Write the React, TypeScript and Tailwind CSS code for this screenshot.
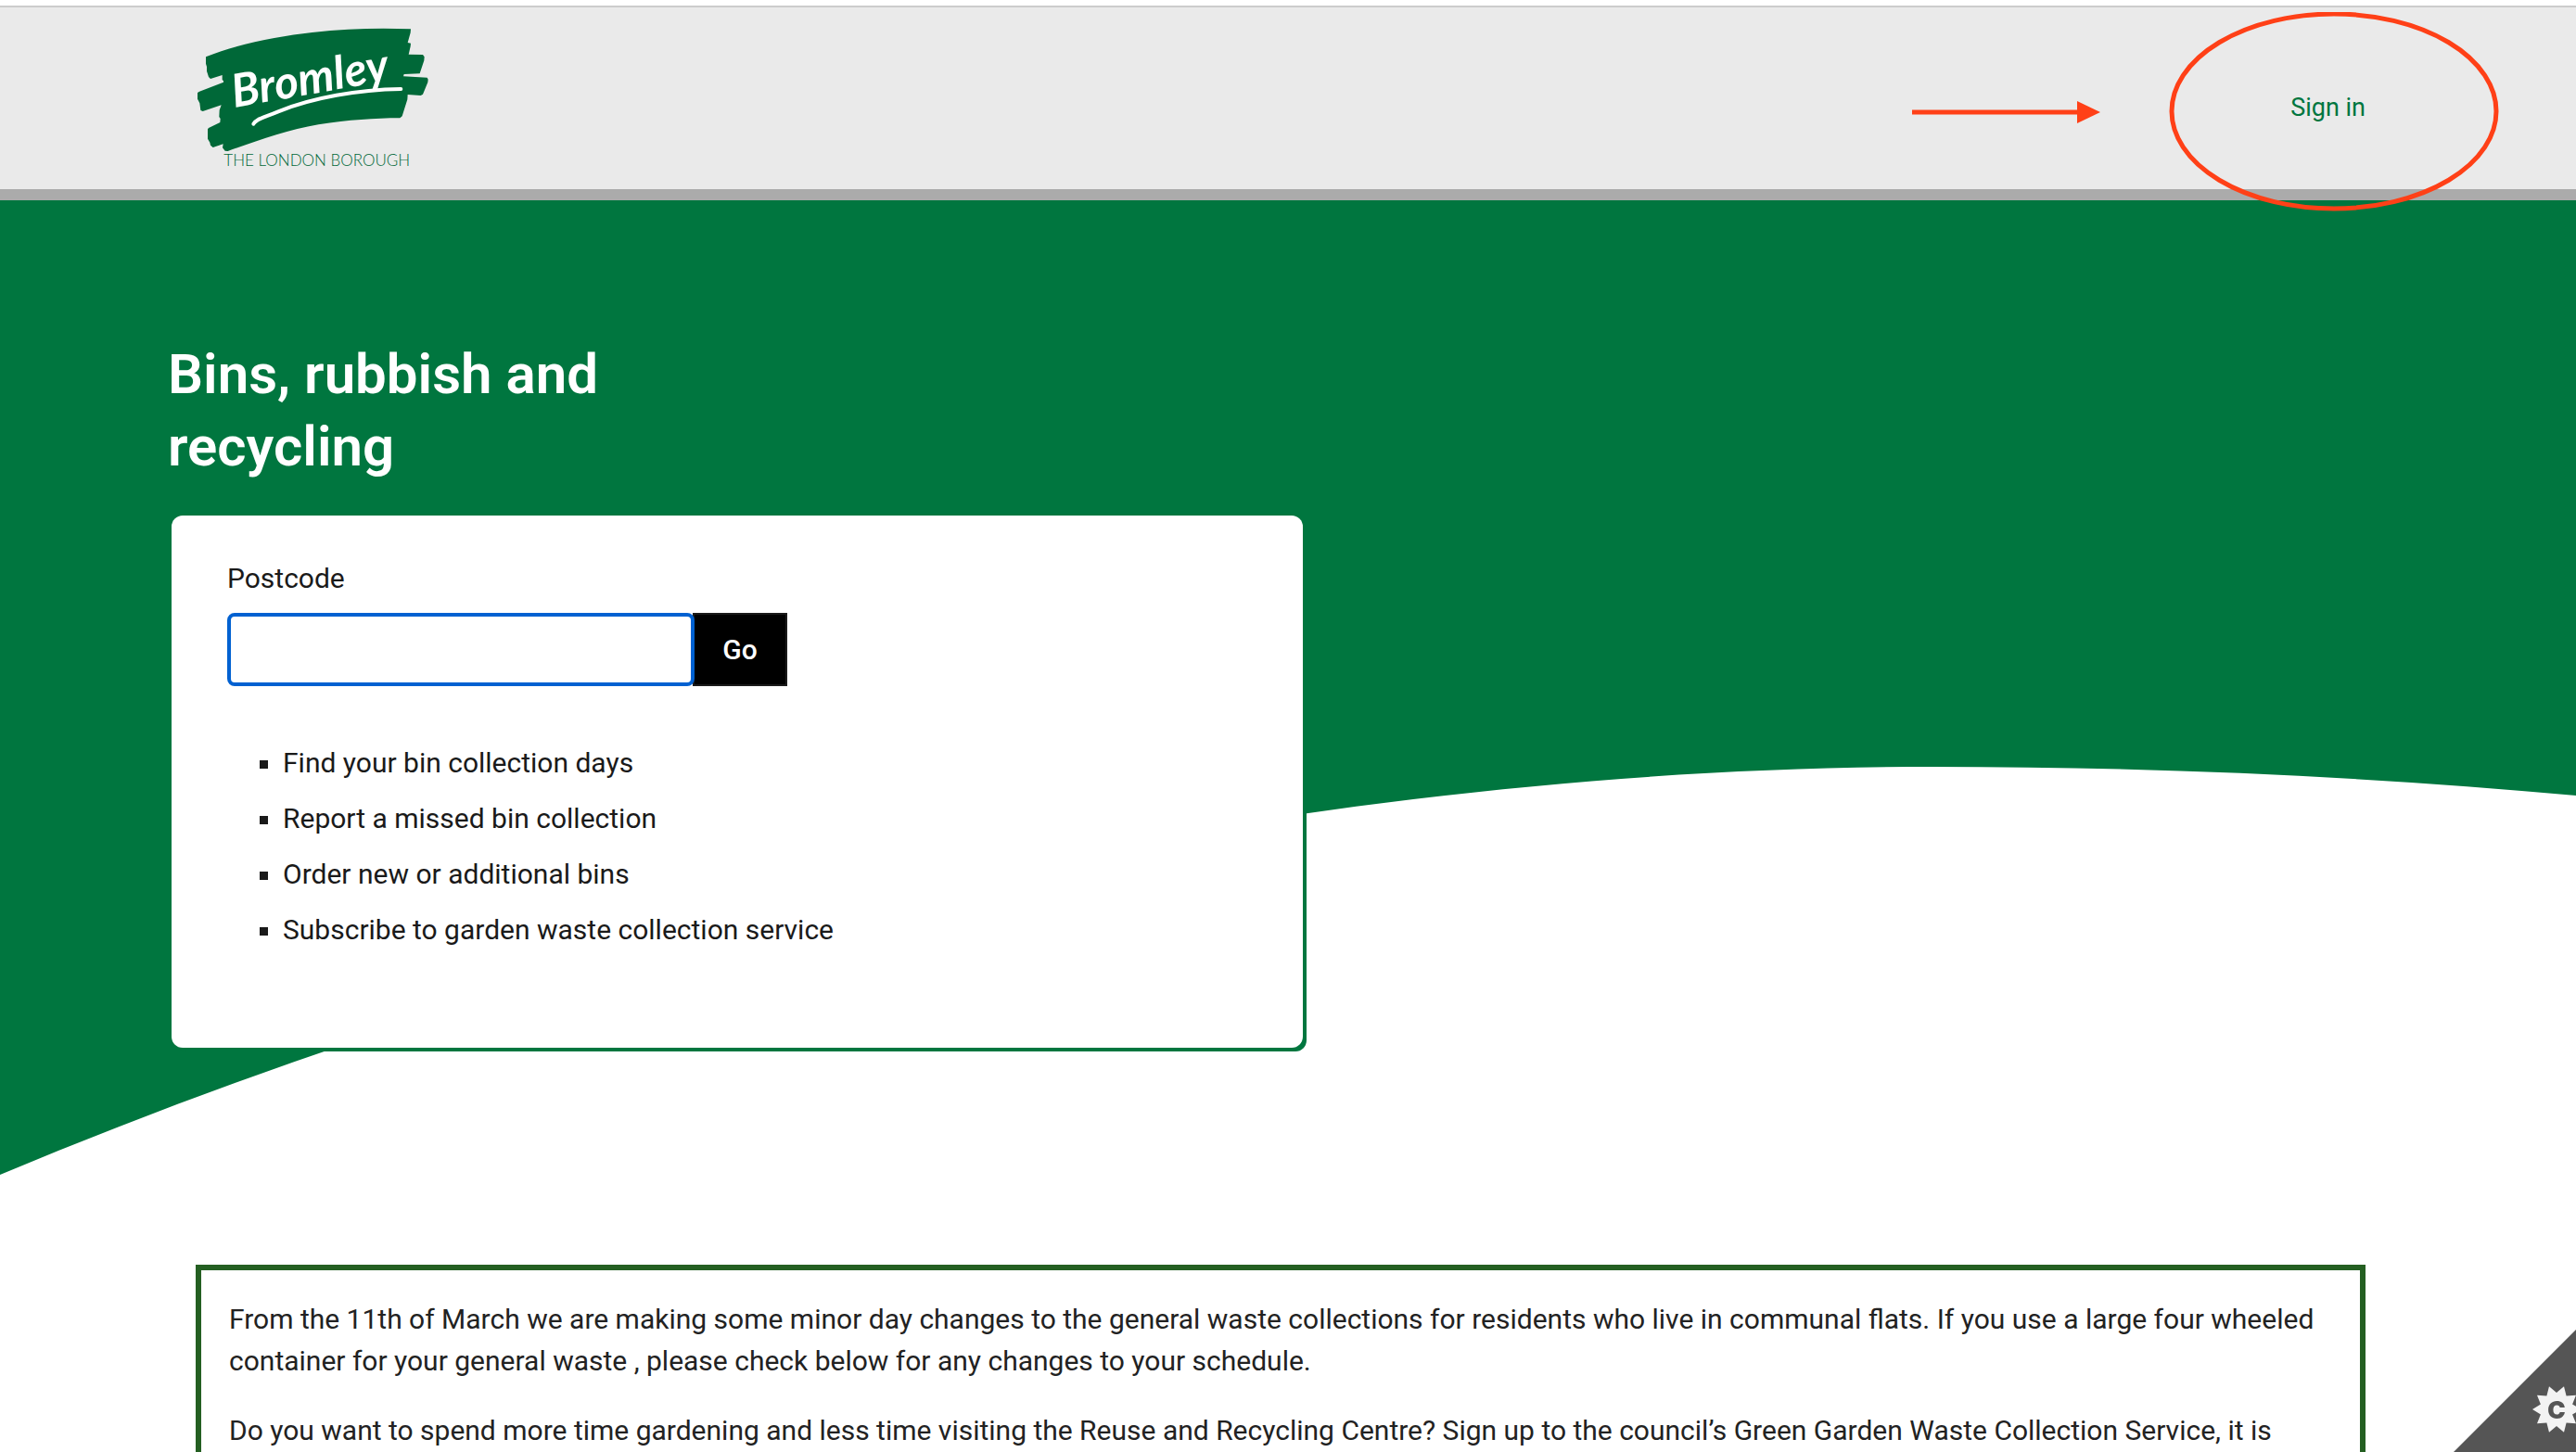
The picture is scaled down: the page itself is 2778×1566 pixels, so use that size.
import React from "react";

const services = [
  "Find your bin collection days",
  "Report a missed bin collection",
  "Order new or additional bins",
  "Subscribe to garden waste collection service",
];

function BromleyLogo() {
  return (
    <svg viewBox="66 90 753 465" className="h-[155px] w-[251px]" role="img" aria-label="Bromley, the London Borough">
      <path
        fill="#006838"
        d="M96 184C200 142 330 117 440 105C550 93 650 90 759 94L758 106L749 138L759 140L758 150L752 176L798 177L803 184L802 196L788 238L737 240L735 247L812 251L815 257L814 266L798 305L791 309L749 306L748 322L731 376L724 382C640 382 560 388 460 403C360 420 260 456 167 489L158 488L150 478L152 466L119 477L111 470L109 461L102 449V418L105 414L142 396L143 384L139 378L140 356L146 340L86 360L79 357L76 334L69 320V300L75 296L153 266V262L149 258L149 243L111 255L105 249L99 230V216L96 206Z"
      />
      <text
        x="188"
        y="348"
        transform="rotate(-10 188 348)"
        fill="#fff"
        fontSize="148"
        className="font-['Lato'] font-bold italic"
      >
        Bromley
      </text>
      <path
        d="M250 401C258 385 280 382 330 361C440 316 590 290 727 288"
        fill="none"
        stroke="#fff"
        strokeWidth="12"
        strokeLinecap="round"
      />
      <text x="154" y="537" fill="#006838" fontSize="51" className="font-['Lato'] font-light">
        THE LONDON BOROUGH
      </text>
    </svg>
  );
}

function Header() {
  return (
    <header className="relative z-10 mt-1.5 flex items-center justify-between border-t-2 border-b-12 border-t-[#cccccc] border-b-[#ababab] bg-[#eaeaea] pt-[22px] pr-[227px] pb-[19px] pl-[212px]">
      <a href="#home">
        <BromleyLogo />
      </a>
      <nav className="relative pt-4">
        <a href="#sign-in" className="block text-[27px] leading-[42px] text-[#00763f]">
          Sign in
        </a>
        <svg
          viewBox="0 0 634 216"
          className="pointer-events-none absolute top-[-66px] right-[-145px] h-[216px] w-[634px] max-w-none"
          fill="none"
          stroke="#ff4017"
          aria-hidden="true"
        >
          <path d="M0 108H180" strokeWidth="5" />
          <path d="M178 96L203 108L178 120Z" fill="#ff4017" stroke="none" />
          <ellipse cx="455" cy="107" rx="175" ry="105" strokeWidth="5" />
        </svg>
      </nav>
    </header>
  );
}

function PostcodeCard() {
  return (
    <div className="mt-[35px] w-[1220px] max-w-full rounded-xl bg-white px-[60px] pt-[45px] pb-[105px] shadow-[4px_4px_0_0_#00763f]">
      <form onSubmit={(e) => e.preventDefault()}>
        <label htmlFor="postcode" className="block text-[#1a1a1a]">
          Postcode
        </label>
        <div className="mt-[15px] flex">
          <input
            id="postcode"
            type="text"
            className="relative z-10 h-[79px] w-[504px] rounded-lg border-4 border-[#0061d1] bg-white px-4 outline-none"
          />
          <button type="submit" className="-ml-0.5 h-[79px] w-[102px] border-2 border-[#1a1a1a] bg-black font-medium text-white">
            Go
          </button>
        </div>
      </form>
      <ul className="mt-[60px] flex flex-col gap-[15px] pl-[35px] text-[#1a1a1a]">
        {services.map((s) => (
          <li key={s} className="flex items-center gap-4">
            <span className="mt-1 size-[9px] bg-[#1a1a1a]" />
            {s}
          </li>
        ))}
      </ul>
    </div>
  );
}

function Hero() {
  return (
    <section className="relative pt-[149px] pr-[181px] pb-[137px] pl-[185px]">
      <svg
        viewBox="0 216 2778 1051"
        preserveAspectRatio="none"
        className="absolute inset-0 -z-10 h-full w-full"
        aria-hidden="true"
      >
        <path fill="#00763f" d="M0 216H2778V858C2560 838 2330 827 2084 827C1440 827 690 978 0 1267Z" />
      </svg>
      <h1 className="-ml-1 max-w-[520px] text-[60px] leading-[78px] font-semibold text-white">
        Bins, rubbish and recycling
      </h1>
      <PostcodeCard />
    </section>
  );
}

function CookieCorner() {
  const points = Array.from({ length: 20 }, (_, i) => {
    const r = i % 2 === 0 ? 26 : 18;
    const a = (i * Math.PI) / 10;
    return `${(111 + r * Math.cos(a)).toFixed(1)},${(86 + r * Math.sin(a)).toFixed(1)}`;
  }).join(" ");
  return (
    <button type="button" aria-label="Cookie control" className="fixed right-0 bottom-0">
      <svg viewBox="0 0 132 132" className="block size-[132px]">
        <path d="M132 0V132H0Z" fill="#555555" />
        <polygon points={points} fill="#f3f3f3" />
        <text x="111" y="96" textAnchor="middle" fontSize="26" fill="#555555" className="font-['Inter'] font-black">
          C
        </text>
      </svg>
    </button>
  );
}

export default function App() {
  return (
    <div className="isolate flex h-screen flex-col overflow-hidden bg-white font-['Roboto',sans-serif] text-[30px] leading-[45px]">
      <Header />
      <Hero />
      <main className="mt-[97px] mr-[227px] ml-[211px] flex flex-1 flex-col gap-[30px] border-6 border-b-0 border-[#245f22] px-[30px] pt-[30px] text-[#222222]">
        <p>
          From the 11th of March we are making some minor day changes to the general waste collections for residents who
          live in communal flats. If you use a large four wheeled container for your general waste , please check below
          for any changes to your schedule.
        </p>
        <p>
          Do you want to spend more time gardening and less time visiting the Reuse and Recycling Centre? Sign up to the
          council’s Green Garden Waste Collection Service, it is
        </p>
      </main>
      <CookieCorner />
    </div>
  );
}
